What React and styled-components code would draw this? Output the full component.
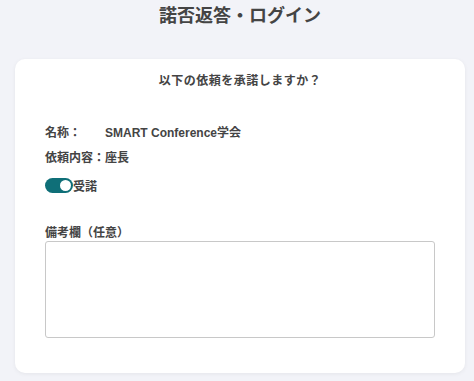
import styled, { createGlobalStyle } from 'styled-components';

const GlobalStyle = createGlobalStyle`
    body{
        margin: 0;
        background-color: #f2f3f8;
        font-family: "Liberation Sans", "Noto Sans CJK JP", sans-serif;
        color: #444;
    }
`

const Page = styled.main`
    display: flex;
    flex-direction: column;
    padding: 4px 9px 8px 15px;
`

const Title = styled.h1`
    font-size: 18px;
    line-height: 24px;
    font-weight: 700;
    margin: 0 0 31px;
    text-align: center;
`

const Card = styled.section`
    background-color: #fff;
    border-radius: 10px;
    box-shadow: 0 1px 4px rgba(0,0,0,0.06);
    display: flex;
    flex-direction: column;
    padding: 13px 30px 35px;
`

const Question = styled.p`
    font-size: 12px;
    line-height: 18px;
    font-weight: 700;
    letter-spacing: 0.5px;
    margin: 0 0 34px;
    text-align: center;
`

const InfoRow = styled.div`
    display: flex;
    font-size: 12px;
    line-height: 18px;
    font-weight: 700;
    margin-bottom: ${({ $gap }) => $gap}px;
    .label{
        width: ${({ $labelWidth }) => $labelWidth ? `${$labelWidth}px` : 'auto'};
    }
`

const ToggleLabel = styled.label`
    align-items: center;
    display: flex;
    font-size: 12px;
    font-weight: 700;
    margin-bottom: 31px;
    input{
        display: none;
    }
`

const Track = styled.span`
    background-color: ${({ $on }) => $on ? '#0f6f78' : '#ccc'};
    border-radius: 8px;
    display: flex;
    height: 15px;
    justify-content: ${({ $on }) => $on ? 'flex-end' : 'flex-start'};
    align-items: center;
    padding: 0 2px;
    box-sizing: border-box;
    width: 28px;
    &::after{
        content: '';
        background-color: #fff;
        border-radius: 50%;
        height: 11px;
        width: 11px;
    }
`

const FieldLabel = styled.label`
    font-size: 12px;
    line-height: 16px;
    font-weight: 700;
`

const Remarks = styled.textarea`
    border: 1px solid #c8c8c8;
    border-radius: 3px;
    box-sizing: border-box;
    height: 97px;
    resize: none;
    width: 100%;
    font-family: inherit;
`

export default function App(){
    return(
        <>
            <GlobalStyle />
            <Page>
                <Title>諾否返答・ログイン</Title>
                <Card>
                    <Question>以下の依頼を承諾しますか？</Question>
                    <InfoRow $gap={7} $labelWidth={60}>
                        <span className='label'>名称：</span>
                        <span>SMART Conference学会</span>
                    </InfoRow>
                    <InfoRow $gap={10}>
                        <span className='label'>依頼内容：</span>
                        <span>座長</span>
                    </InfoRow>
                    <ToggleLabel>
                        <input type='checkbox' defaultChecked />
                        <Track $on />
                        受諾
                    </ToggleLabel>
                    <FieldLabel htmlFor='remarks'>備考欄（任意）</FieldLabel>
                    <Remarks id='remarks' />
                </Card>
            </Page>
        </>
    );
}
